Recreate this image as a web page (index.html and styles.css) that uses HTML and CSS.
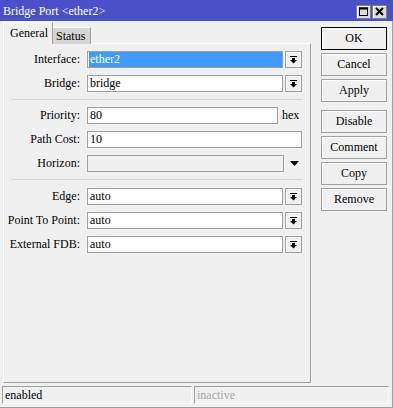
FILE: index.html
```html
<!DOCTYPE html>
<html lang="en">
  <head>
    <meta charset="UTF-8" />
    <title>Bridge Port &lt;ether2&gt;</title>
    <link rel="stylesheet" href="styles.css">
  </head>
  <body>
    <div class="window">
      <div class="titlebar">
        <span class="title">Bridge Port &lt;ether2&gt;</span>
        <div class="title-buttons">
          <span class="tbtn">
            <svg width="9" height="9" viewBox="0 0 9 9"><rect x="0.5" y="1" width="8" height="7.5" fill="none" stroke="#000" stroke-width="1"/><rect x="0" y="0.5" width="9" height="2" fill="#000"/></svg>
          </span>
          <span class="tbtn">
            <svg width="9" height="9" viewBox="0 0 9 9"><path d="M1 1 L8 8 M8 1 L1 8" stroke="#000" stroke-width="2"/></svg>
          </span>
        </div>
      </div>

      <div class="main">
        <div class="left">
          <div class="tabs">
            <div class="tab active">General</div>
            <div class="tab">Status</div>
          </div>

          <div class="panel">
            <div class="row">
              <label>Interface:</label>
              <div class="field selected">ether2</div>
              <span class="drop">
                <svg width="7" height="8" viewBox="0 0 7 8"><rect x="0" y="0" width="7" height="1" fill="#000"/><rect x="2" y="2" width="3" height="2" fill="#000"/><polygon points="0,4 7,4 3.5,7.5" fill="#000"/></svg>
              </span>
            </div>
            <div class="row">
              <label>Bridge:</label>
              <div class="field">bridge</div>
              <span class="drop">
                <svg width="7" height="8" viewBox="0 0 7 8"><rect x="0" y="0" width="7" height="1" fill="#000"/><rect x="2" y="2" width="3" height="2" fill="#000"/><polygon points="0,4 7,4 3.5,7.5" fill="#000"/></svg>
              </span>
            </div>

            <div class="sep"></div>

            <div class="row">
              <label>Priority:</label>
              <div class="field short">80</div>
              <span class="unit">hex</span>
            </div>
            <div class="row">
              <label>Path Cost:</label>
              <div class="field wide">10</div>
            </div>
            <div class="row">
              <label>Horizon:</label>
              <div class="field disabled"></div>
              <span class="arrow">
                <svg width="9" height="5" viewBox="0 0 9 5"><polygon points="0,0 9,0 4.5,5" fill="#000"/></svg>
              </span>
            </div>

            <div class="sep sep-2"></div>

            <div class="row">
              <label>Edge:</label>
              <div class="field">auto</div>
              <span class="drop">
                <svg width="7" height="8" viewBox="0 0 7 8"><rect x="0" y="0" width="7" height="1" fill="#000"/><rect x="2" y="2" width="3" height="2" fill="#000"/><polygon points="0,4 7,4 3.5,7.5" fill="#000"/></svg>
              </span>
            </div>
            <div class="row">
              <label>Point To Point:</label>
              <div class="field">auto</div>
              <span class="drop">
                <svg width="7" height="8" viewBox="0 0 7 8"><rect x="0" y="0" width="7" height="1" fill="#000"/><rect x="2" y="2" width="3" height="2" fill="#000"/><polygon points="0,4 7,4 3.5,7.5" fill="#000"/></svg>
              </span>
            </div>
            <div class="row">
              <label>External FDB:</label>
              <div class="field">auto</div>
              <span class="drop">
                <svg width="7" height="8" viewBox="0 0 7 8"><rect x="0" y="0" width="7" height="1" fill="#000"/><rect x="2" y="2" width="3" height="2" fill="#000"/><polygon points="0,4 7,4 3.5,7.5" fill="#000"/></svg>
              </span>
            </div>
          </div>
        </div>

        <!-- Dialog buttons -->
        <div class="side">
          <button class="default">OK</button>
          <button>Cancel</button>
          <button>Apply</button>
          <button class="gap">Disable</button>
          <button>Comment</button>
          <button>Copy</button>
          <button>Remove</button>
        </div>
      </div>

      <div class="statusbar">
        <div class="status first">enabled</div>
        <div class="status second">inactive</div>
      </div>
    </div>
  </body>
</html>
```

FILE: styles.css
```css
* {
  box-sizing: border-box;
}

body {
  margin: 0;
  font-family: "Liberation Serif", "Times New Roman", serif;
  font-size: 12px;
  color: #000;
  background: #f0f0f0;
}

.window {
  width: 393px;
  height: 408px;
  display: flex;
  flex-direction: column;
  background: #f0f0f0;
  border-right: 1px solid #a0a0a0;
  border-bottom: 1px solid #a0a0a0;
}

.titlebar {
  height: 21px;
  margin-right: -1px;
  background: #4b4fc9;
  color: #fff;
  display: flex;
  align-items: center;
  justify-content: space-between;
  padding-left: 3px;
}

.title {
  font-size: 12px;
  line-height: 14px;
}

.title-buttons {
  display: flex;
  gap: 1px;
  margin-right: 6px;
  margin-top: 2px;
}

.tbtn {
  width: 15px;
  height: 14px;
  background: #dcdcdc;
  border: 1px solid #808080;
  box-shadow: inset 1px 1px #fff;
  display: flex;
  align-items: center;
  justify-content: center;
}

.main {
  display: flex;
  height: 363px;
}

.left {
  padding-left: 3px;
  width: 311px;
}

.tabs {
  height: 23px;
  display: flex;
  align-items: flex-end;
}

.tab {
  height: 17px;
  width: 38px;
  padding-left: 3px;
  line-height: 16px;
  background: #d6d6d6;
  border-top: 1px solid #fff;
  border-right: 1px solid #a0a0a0;
}

.tab.active {
  height: 22px;
  width: 50px;
  padding-left: 6px;
  line-height: 20px;
  background: #f0f0f0;
  border-left: 1px solid #fff;
}

.panel {
  height: 340px;
  padding-top: 7px;
  border-left: 1px solid #fff;
  border-top: 1px solid #fff;
  border-right: 1px solid #a0a0a0;
  border-bottom: 1px solid #a0a0a0;
  margin-top: -1px;
}

.row {
  display: flex;
  align-items: center;
  height: 17px;
  margin-bottom: 7px;
}

.row label {
  width: 76px;
  text-align: right;
  margin-right: 7px;
  white-space: nowrap;
}

.field {
  width: 196px;
  height: 17px;
  border: 1px solid #a0a0a0;
  background: #fff;
  padding-left: 2px;
  line-height: 15px;
  white-space: nowrap;
}

.field.selected {
  background: #3d9bfd;
  color: #fff;
  box-shadow: inset 1px 0 #fff;
}

.field.short {
  width: 191px;
}

.field.wide {
  width: 215px;
}

.field.disabled {
  width: 197px;
  background: #f0f0f0;
}

.drop {
  width: 17px;
  height: 17px;
  margin-left: 2px;
  border: 1px solid #a0a0a0;
  background: #f0f0f0;
  box-shadow: inset 1px 1px #fff;
  display: flex;
  align-items: center;
  justify-content: center;
}

.unit {
  margin-left: 4px;
}

.arrow {
  display: flex;
  margin-left: 6px;
}

.sep {
  height: 1px;
  width: 291px;
  margin: 2px 0 7px 7px;
  background: #d8d8d8;
}

.sep.sep-2 {
  margin: 3px 0 8px 7px;
}

.side {
  display: flex;
  flex-direction: column;
  padding-top: 6px;
  margin-left: 10px;
}

.side button {
  width: 66px;
  height: 23px;
  margin-bottom: 3px;
  font-family: "Liberation Serif", "Times New Roman", serif;
  font-size: 12px;
  color: #000;
  background: #f0f0f0;
  border: 1px solid #a0a0a0;
  box-shadow: inset 1px 1px #fff;
  padding: 0;
}

.side button.default {
  border-color: #000;
}

.side button.gap {
  margin-top: 5px;
}

.statusbar {
  display: flex;
  gap: 2px;
  padding: 2px 0 0 2px;
}

.status {
  height: 18px;
  padding-left: 2px;
  line-height: 16px;
  border: 1px solid;
  border-color: #a0a0a0 #fafafa #fafafa #a0a0a0;
}

.status.first {
  width: 190px;
}

.status.second {
  width: 195px;
  color: #a8a8a8;
}
```
